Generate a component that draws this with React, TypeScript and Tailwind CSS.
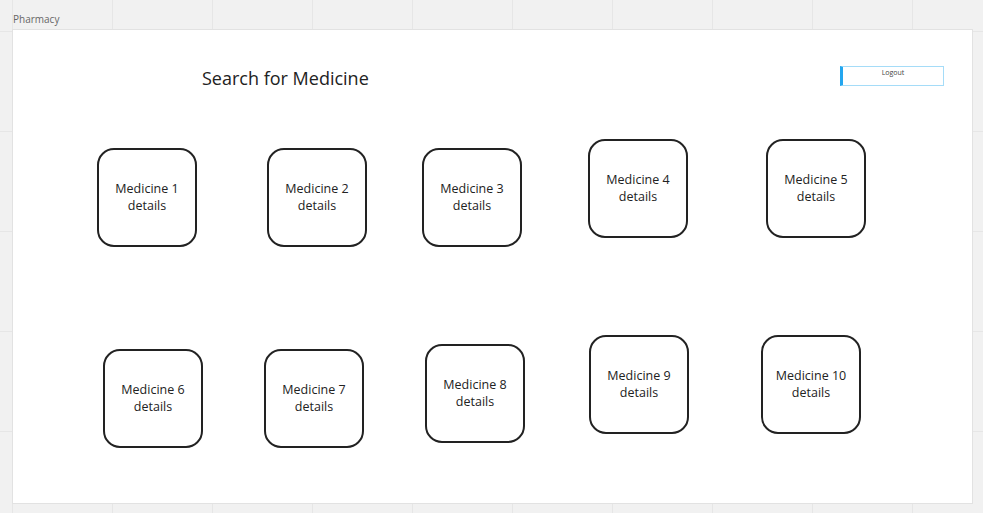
const medicines = [
  { n: 1, x: 84, y: 118 },
  { n: 2, x: 254, y: 118 },
  { n: 3, x: 409, y: 118 },
  { n: 4, x: 575, y: 109 },
  { n: 5, x: 753, y: 109 },
  { n: 6, x: 90, y: 319 },
  { n: 7, x: 251, y: 319 },
  { n: 8, x: 412, y: 314 },
  { n: 9, x: 576, y: 305 },
  { n: 10, x: 748, y: 305 },
];

function MedicineCard({ n, x, y }: { n: number; x: number; y: number }) {
  return (
    <div
      className="absolute flex h-[99px] w-[100px] items-center justify-center rounded-[17px] border-2 border-[#222] text-center text-[12.5px] leading-[17px] text-[#222]"
      style={{ left: x, top: y }}
    >
      <div className="-mt-[1px]">
        Medicine {n}
        <br />
        details
      </div>
    </div>
  );
}

export default function App() {
  return (
    <div className="h-[513px] w-full overflow-hidden bg-[#f1f1f1] bg-[linear-gradient(to_right,#e6e6e6_1px,transparent_1px),linear-gradient(to_bottom,#e6e6e6_1px,transparent_1px)] bg-size-[100px_100px] bg-position-[12px_31px] font-['Open_Sans',sans-serif]">
      <div className="pl-[13px] pt-[12px] text-[10px] leading-[14px] text-[#666]">Pharmacy</div>
      <div className="relative ml-[12px] mt-[3px] h-[475px] w-[961px] border border-[#e2e2e2] bg-white">
        <h1 className="absolute left-[189px] top-[35px] text-[18px] leading-[26px] text-[#222]">Search for Medicine</h1>
        <button
          type="button"
          className="absolute left-[827px] top-[36px] flex h-[20px] w-[104px] justify-center border border-l-[3px] border-[#a5dcf8] border-l-[#23a6ef] pt-[1px] text-[7px] leading-[10px] text-[#444]"
        >
          Logout
        </button>
        {medicines.map((m) => (
          <MedicineCard key={m.n} {...m} />
        ))}
      </div>
    </div>
  );
}
